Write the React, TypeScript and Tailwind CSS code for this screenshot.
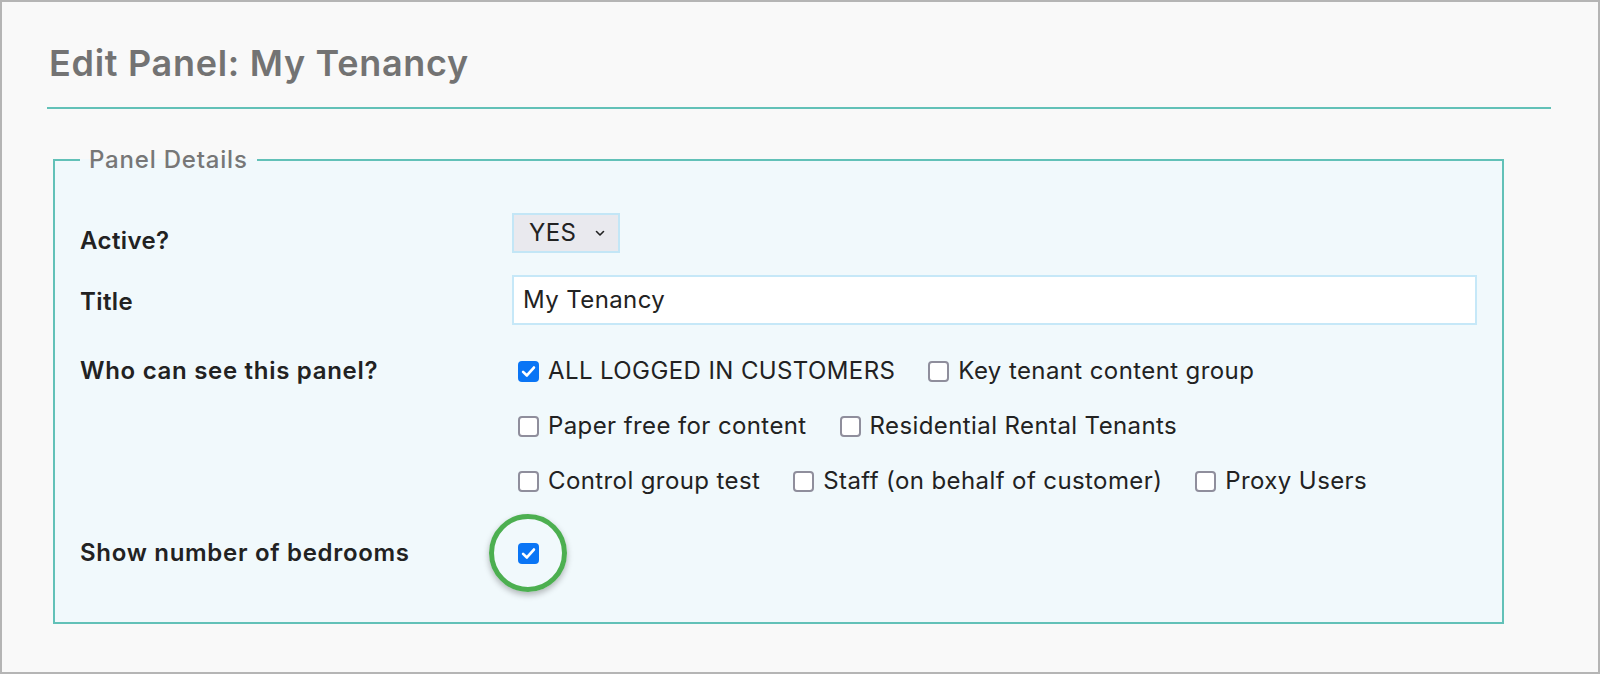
import type { FC } from "react";

const font = { fontFamily: "Inter, 'Noto Sans', sans-serif" };

interface BoxProps {
  checked?: boolean;
}

const Box: FC<BoxProps> = ({ checked }) =>
  checked ? (
    <span className="grid h-[21px] w-[21px] shrink-0 place-items-center rounded-[4px] bg-[#0a75f5]">
      <svg viewBox="0 0 20 20" className="h-[19px] w-[19px]" fill="none">
        <path d="M4.3 10.4 L8.3 14.2 L15.7 5.8" stroke="#fff" strokeWidth="2.8" strokeLinecap="round" strokeLinejoin="round" />
      </svg>
    </span>
  ) : (
    <span className="h-[21px] w-[21px] shrink-0 rounded-[4px] border-2 border-[#8f8e9c] bg-white" />
  );

const Option: FC<{ label: string; checked?: boolean }> = ({ label, checked }) => (
  <label className="flex h-[28px] items-center gap-[9px] whitespace-nowrap">
    <Box checked={checked} />
    <span>{label}</span>
  </label>
);

const groupLines = [
  [
    { label: "ALL LOGGED IN CUSTOMERS", checked: true },
    { label: "Key tenant content group" },
  ],
  [{ label: "Paper free for content" }, { label: "Residential Rental Tenants" }],
  [{ label: "Control group test" }, { label: "Staff (on behalf of customer)" }, { label: "Proxy Users" }],
];

export default function App() {
  return (
    <div style={font} className="h-[674px] w-[1600px] overflow-hidden border-2 border-[#b5b5b5] bg-[#f9f9f9] px-[45px] text-[#222]">
      <h1 className="mt-[41px] pl-[2px] text-[36px] font-semibold leading-[40px] tracking-[0.7px] text-[#737373]">
        Edit Panel: My Tenancy
      </h1>
      <div className="mt-[24px] h-[2px] w-[1504px] bg-[#62c1b8]" />

      <fieldset className="ml-[6px] mt-[37px] w-[1451px] border-2 border-[#62c1b8] bg-[#f1f9fc] pb-[55px] pl-[25px] pr-[25px] tracking-[0.4px]">
        <legend className="px-[9px] text-[24px] font-medium leading-[28px] tracking-[0.8px] text-[#777]">Panel Details</legend>

        <div className="mt-[39px] flex items-start text-[24px]">
          <div className="w-[432px] pt-[14px] font-semibold leading-[28px]">Active?</div>
          <div className="flex h-[40px] w-[108px] items-center justify-between border-2 border-[#c3e6f6] bg-[#e9e9ee] pl-[15px] pr-[12px] leading-[28px]">
            <span>YES</span>
            <svg viewBox="0 0 12 12" className="h-[12px] w-[12px]" fill="none">
              <path d="M2.5 4.5 L6 8 L9.5 4.5" stroke="#222" strokeWidth="1.6" strokeLinecap="round" strokeLinejoin="round" />
            </svg>
          </div>
        </div>

        <div className="mt-[20px] flex items-start text-[24px]">
          <div className="w-[432px] pt-[13px] font-semibold leading-[28px]">Title</div>
          <div className="flex h-[50px] w-[965px] items-center border-2 border-[#c6e8f8] bg-white pl-[9px] leading-[28px]">
            My Tenancy
          </div>
        </div>

        <div className="mt-[32px] flex items-start text-[24px]">
          <div className="w-[432px] font-semibold leading-[28px] tracking-[0.7px]">Who can see this panel?</div>
          <div className="flex flex-col gap-[27px] pl-[6px] leading-[28px]">
            {groupLines.map((line, i) => (
              <div key={i} className="flex items-center gap-[33px]">
                {line.map((o) => (
                  <Option key={o.label} label={o.label} checked={o.checked} />
                ))}
              </div>
            ))}
          </div>
        </div>

        <div className="mt-[44px] flex items-center text-[24px]">
          <div className="w-[432px] font-semibold leading-[28px] tracking-[0.7px]">Show number of bedrooms</div>
          <div className="relative ml-[6px] flex h-[28px] items-center">
            <Box checked />
            <span className="absolute left-[-29px] top-[-25px] h-[78px] w-[78px] rounded-full border-[5px] border-[#4caf50] shadow-[0_3px_6px_rgba(0,0,0,0.28)]" />
          </div>
        </div>
      </fieldset>
    </div>
  );
}
